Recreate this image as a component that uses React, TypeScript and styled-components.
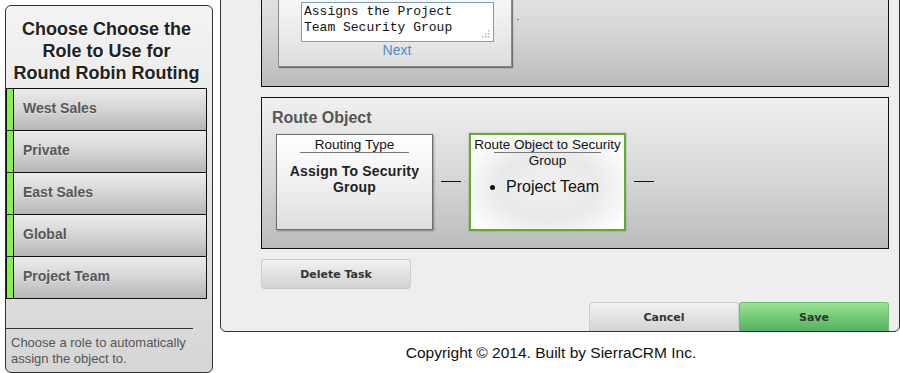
import React from "react";
import styled, { createGlobalStyle } from "styled-components";

const Global = createGlobalStyle`
  html, body { margin: 0; padding: 0; background: #fff; }
  body { font-family: "Liberation Sans", Arial, sans-serif; overflow: hidden; }
  * { box-sizing: border-box; }
`;

const Page = styled.div`
  display: flex;
  align-items: flex-start;
  gap: 7px;
  padding-left: 5px;
  width: 900px;
  height: 373px;
  overflow: hidden;
`;

const Sidebar = styled.aside`
  margin-top: 5px;
  width: 208px;
  height: 368px;
  border: 1px solid #333;
  border-radius: 6px;
  background: linear-gradient(to bottom, #f3f3f3 0%, #e4e4e4 50%, #d6d6d6 100%);
  display: flex;
  flex-direction: column;
  padding: 12px 5px 5px 0;
`;

const SideTitle = styled.h2`
  margin: 0 0 4px;
  font-size: 18px;
  line-height: 22px;
  font-weight: bold;
  text-align: center;
  color: #222;
  text-shadow: 1px 1px 0 rgba(255, 255, 255, 0.8);
`;

const RoleList = styled.ul`
  list-style: none;
  margin: 0;
  padding: 0;
  border: 1px solid #111;
`;

const RoleItem = styled.li`
  display: flex;
  height: 42px;
  border-top: 1px solid #111;
  &:first-child {
    height: 41px;
    border-top: none;
  }
`;

const RoleMarker = styled.span`
  width: 7px;
  background: #8af04e;
  border-right: 1px solid #111;
`;

const RoleLabel = styled.span`
  flex: 1;
  display: flex;
  align-items: center;
  padding: 0 0 3px 9px;
  font-size: 14px;
  font-weight: bold;
  color: #575757;
  background: linear-gradient(to bottom, #ececec 0%, #d2d2d2 55%, #b6b6b6 100%);
  text-shadow: 0 1px 0 rgba(255, 255, 255, 0.4);
`;

const SideFooter = styled.div`
  margin-top: auto;
`;

const SideRule = styled.hr`
  margin: 0;
  width: 187px;
  border: none;
  border-top: 1px solid #333;
`;

const SideHint = styled.p`
  margin: 0;
  padding: 6px 0 0 5px;
  font-size: 13px;
  line-height: 16px;
  color: #555;
`;

const RightColumn = styled.div`
  width: 680px;
  display: flex;
  flex-direction: column;
`;

const MainPanel = styled.main`
  margin-top: -49px;
  border: 1px solid #333;
  border-radius: 0 0 6px 6px;
  background: #eeeeee;
  padding: 10px 10px 0 40px;
  display: flex;
  flex-direction: column;
  overflow: hidden;
`;

const Section = styled.section<{ $pt: number; $pb: number; $pl: number }>`
  border: 1px solid #111;
  background: linear-gradient(to bottom, #f0f0f0 0%, #d6d6d6 55%, #bbbbbb 100%);
  padding: ${(p) => p.$pt}px 10px ${(p) => p.$pb}px ${(p) => p.$pl}px;
  & + & {
    margin-top: 10px;
  }
`;

const SectionTitle = styled.h3`
  margin: 0 0 5px;
  font-size: 16px;
  line-height: 20px;
  font-weight: bold;
  color: #555;
`;

const FlowRow = styled.div<{ $pl?: number }>`
  display: flex;
  align-items: center;
  padding-left: ${(p) => p.$pl ?? 0}px;
`;

const TaskCard = styled.div`
  width: 234px;
  border: 1px solid #8a8a8a;
  background: linear-gradient(to bottom, #ffffff 0%, #ececec 60%, #dcdcdc 100%);
  box-shadow: 1px 1px 1px rgba(0, 0, 0, 0.45);
  padding: 26px 0 8px;
  display: flex;
  flex-direction: column;
`;

const TextWrap = styled.div`
  position: relative;
  margin-left: 22px;
  width: 193px;
  height: 40px;
`;

const TaskText = styled.textarea`
  display: block;
  width: 100%;
  height: 100%;
  border: 1px solid #7f9db9;
  background: #fff;
  padding: 1px 2px;
  font-family: "Liberation Mono", "Courier New", monospace;
  font-size: 13px;
  line-height: 16px;
  color: #111;
  overflow: hidden;
  resize: none;
  outline: none;
`;

const Grip = styled.svg`
  position: absolute;
  right: 4px;
  bottom: 4px;
  width: 9px;
  height: 9px;
  pointer-events: none;
`;

const NextLink = styled.a`
  display: block;
  text-align: center;
  font-size: 14px;
  line-height: 16px;
  color: #4a8fc4;
  text-decoration: none;
  cursor: pointer;
  padding-left: 4px;
`;

const StubDot = styled.span`
  margin-left: 5px;
  margin-top: -4px;
  width: 2px;
  height: 1px;
  background: #888;
`;

const NodeCard = styled.div<{ $active?: boolean }>`
  position: relative;
  width: 157px;
  height: ${(p) => (p.$active ? 98 : 96)}px;
  border: ${(p) => (p.$active ? "2px solid #5fae2b" : "1px solid #6e6e6e")};
  background: ${(p) =>
    p.$active
      ? "radial-gradient(ellipse at 50% 55%, #f2f2f2 0%, #e9e9e9 45%, #ffffff 85%)"
      : "linear-gradient(to bottom, #ffffff 0%, #efefef 55%, #dedede 100%)"};
  box-shadow: ${(p) =>
    p.$active ? "0 0 2px rgba(0,0,0,0.25)" : "1px 1px 2px rgba(0, 0, 0, 0.35)"};
  padding-top: 2px;
  text-align: center;
  color: #111;
  &::after {
    content: "";
    position: absolute;
    top: 17px;
    left: 23px;
    right: 23px;
    border-top: 1px solid #777;
  }
`;

const NodeHeader = styled.div`
  font-size: 13.5px;
  line-height: 16px;
`;

const NodeBody = styled.div`
  margin-top: 10px;
  font-size: 14px;
  line-height: 16px;
  font-weight: bold;
  color: #222;
  letter-spacing: 0.2px;
`;

const NodeList = styled.ul`
  margin: 9px 0 0;
  padding-left: 35px;
  text-align: left;
  font-size: 16px;
  line-height: 18px;
`;

const Link = styled.div<{ $ml?: number }>`
  display: flex;
  align-items: center;
  margin-left: ${(p) => p.$ml ?? 0}px;
  margin-top: -1px;
`;

const LinkDot = styled.span<{ $m: string }>`
  width: 1px;
  height: 1px;
  background: #999;
  margin: ${(p) => p.$m};
`;

const LinkLine = styled.span`
  width: 20px;
  height: 1px;
  background: #111;
`;

const Btn = styled.button<{ $variant?: "plain" | "save" }>`
  width: 150px;
  font-family: "DejaVu Sans", Verdana, sans-serif;
  font-weight: bold;
  font-size: 11px;
  color: #333;
  border: 1px solid ${(p) => (p.$variant === "save" ? "#6cc070" : "#cccccc")};
  border-radius: 3px;
  background: ${(p) =>
    p.$variant === "save"
      ? "linear-gradient(to bottom, #9ae392 0%, #74c977 50%, #52ad5f 100%)"
      : "linear-gradient(to bottom, #f2f2f2 0%, #e2e2e2 50%, #d2d2d2 100%)"};
  cursor: pointer;
  padding: 0;
`;

const DeleteBtn = styled(Btn)`
  margin-top: 10px;
  height: 30px;
`;

const ActionRow = styled.div`
  margin-top: 13px;
  display: flex;
  justify-content: flex-end;
  & > button {
    height: 30px;
    margin-bottom: -1px;
    border-bottom: none;
    border-radius: 3px 3px 0 0;
  }
`;

const Footer = styled.footer`
  margin-top: 12px;
  padding-right: 18px;
  text-align: center;
  font-size: 15.5px;
  line-height: 18px;
  color: #111;
`;

const roles = ["West Sales", "Private", "East Sales", "Global", "Project Team"];

export default function App() {
  return (
    <>
      <Global />
      <Page>
        <Sidebar>
          <SideTitle>
            Choose Choose the
            <br />
            Role to Use for
            <br />
            Round Robin Routing
          </SideTitle>
          <RoleList>
            {roles.map((r) => (
              <RoleItem key={r}>
                <RoleMarker />
                <RoleLabel>{r}</RoleLabel>
              </RoleItem>
            ))}
          </RoleList>
          <SideFooter>
            <SideRule />
            <SideHint>
              Choose a role to automatically
              <br />
              assign the object to.
            </SideHint>
          </SideFooter>
        </Sidebar>

        <RightColumn>
          <MainPanel>
            <Section $pt={12} $pb={19} $pl={16}>
              <FlowRow>
                <TaskCard>
                  <TextWrap>
                    <TaskText
                      readOnly
                      value={"Assigns the Project\nTeam Security Group"}
                    />
                    <Grip viewBox="0 0 9 9">
                      {[
                        [7, 1],
                        [4, 4],
                        [7, 4],
                        [1, 7],
                        [4, 7],
                        [7, 7],
                      ].map(([x, y]) => (
                        <rect key={`${x}-${y}`} x={x} y={y} width="1.5" height="1.5" fill="#b5b5b5" />
                      ))}
                    </Grip>
                  </TextWrap>
                  <NextLink>Next</NextLink>
                </TaskCard>
                <StubDot />
              </FlowRow>
            </Section>

            <Section $pt={10} $pb={17} $pl={10}>
              <SectionTitle>Route Object</SectionTitle>
              <FlowRow $pl={4}>
                <NodeCard>
                  <NodeHeader>Routing Type</NodeHeader>
                  <NodeBody>
                    Assign To Security
                    <br />
                    Group
                  </NodeBody>
                </NodeCard>
                <Link>
                  <LinkDot $m="0 6px 0 1px" />
                  <LinkLine />
                  <LinkDot $m="0 4px 0 3px" />
                </Link>
                <NodeCard $active>
                  <NodeHeader>Route Object to Security Group</NodeHeader>
                  <NodeList>
                    <li>Project Team</li>
                  </NodeList>
                </NodeCard>
                <Link $ml={8}>
                  <LinkLine />
                </Link>
              </FlowRow>
            </Section>

            <DeleteBtn>Delete Task</DeleteBtn>

            <ActionRow>
              <Btn>Cancel</Btn>
              <Btn $variant="save">Save</Btn>
            </ActionRow>
          </MainPanel>
          <Footer>Copyright © 2014. Built by SierraCRM Inc.</Footer>
        </RightColumn>
      </Page>
    </>
  );
}
